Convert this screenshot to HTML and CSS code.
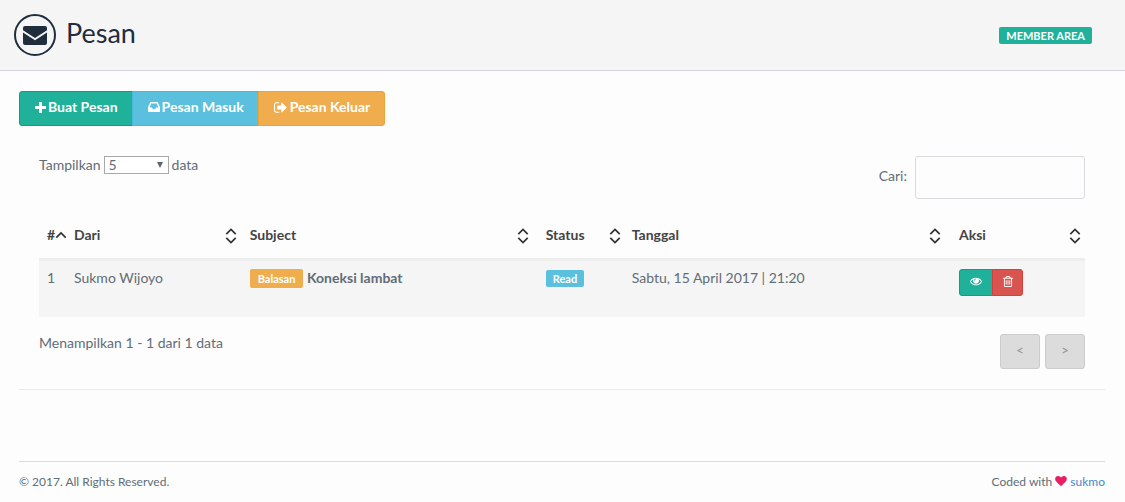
FILE: index.html
```
<!DOCTYPE html>
<html lang="id">
<head>
<meta charset="utf-8">
<meta name="viewport" content="width=device-width, initial-scale=1">
<title>Pesan</title>
<link rel="stylesheet" href="styles.css">
</head>
<body>
<svg class="sprite" aria-hidden="true">
  <symbol id="sort" viewBox="0 0 12 16"><path d="M1.300 6.200 6 1.500l4.700 4.700M1.300 9.800 6 14.500l4.700-4.700" fill="none" stroke="#333" stroke-width="1.700"/></symbol>
</svg>
<header class="page-header">
  <svg class="mail" viewBox="0 0 42 42" aria-hidden="true"><circle cx="21" cy="21" r="20" fill="none" stroke="#1f2d3d" stroke-width="2"/><path d="M11 12h20q2 0 2 2v2.200L21 24 9 16.200v-2.200q0-2 2-2zM9 18.500l12 7.700 12-7.700v10.500q0 2-2 2H11q-2 0-2-2z" fill="#1f2d3d"/></svg>
  <h1 class="title">Pesan</h1>
  <span class="label label-green member">MEMBER AREA</span>
</header>
<main class="content">
  <nav class="button-group">
    <button class="btn green" type="button"><svg class="icon-plus" viewBox="192 128 1408 1408" aria-hidden="true"><path d="M1600 736v192q0 40-28 68t-68 28h-416v416q0 40-28 68t-68 28h-192q-40 0-68-28t-28-68v-416h-416q-40 0-68-28t-28-68v-192q0-40 28-68t68-28h416v-416q0-40 28-68t68-28h192q40 0 68 28t28 68v416h416q40 0 68 28t28 68z"/></svg>Buat Pesan</button>
    <button class="btn blue" type="button"><svg class="icon-inbox" viewBox="128 128 1536 1536" aria-hidden="true"><path d="M1151 960h316q-1-3-2.500-8t-2.500-8l-212-496h-708l-212 496q-1 2-2.500 8t-2.500 8h316l95 192h320zm513 30v482q0 26-19 45t-45 19h-1408q-26 0-45-19t-19-45v-482q0-62 25-123l238-552q10-25 36.500-42t52.500-17h832q26 0 52.500 17t36.500 42l238 552q25 61 25 123z"/></svg>Pesan Masuk</button>
    <button class="btn orange" type="button"><svg class="icon-out" viewBox="64 128 1600 1536" aria-hidden="true"><path d="M704 1440q0 4 1 20t.5 26.500-3 23.500-10 19.500-20.500 6.500h-320q-119 0-203.500-84.500t-84.500-203.500v-704q0-119 84.500-203.500t203.500-84.500h320q13 0 22.500 9.500t9.500 22.500q0 4 1 20t.5 26.500-3 23.500-10 19.500-20.500 6.500h-320q-66 0-113 47t-47 113v704q0 66 47 113t113 47h312l11.500 1 11.500 3 8 5.500 7 9 2 13.500zm928-544q0 26-19 45l-544 544q-19 19-45 19t-45-19-19-45v-288h-448q-26 0-45-19t-19-45v-384q0-26 19-45t45-19h448v-288q0-26 19-45t45-19 45 19l544 544q19 19 19 45z"/></svg>Pesan Keluar</button>
  </nav>
  <section class="panel">
    <div class="toolbar">
      <div class="length"><label for="length">Tampilkan</label>
        <span class="select-wrap"><select id="length"><option>5</option><option>10</option><option>25</option></select><svg viewBox="0 0 6 6" aria-hidden="true"><path d="M0 0h6L3 6z"/></svg></span>
        <label for="length">data</label></div>
      <div class="search"><label for="search">Cari:</label><input id="search" type="search"></div>
    </div>
    <table class="messages">
      <colgroup><col class="c-no"><col class="c-from"><col class="c-subject"><col class="c-status"><col class="c-date"><col class="c-action"></colgroup>
      <thead><tr>
        <th scope="col"><div class="th th-first">#<svg class="asc" viewBox="0 0 12 8" aria-hidden="true"><path d="M1.300 6.700 6 2l4.700 4.700" fill="none" stroke="#333" stroke-width="1.700"/></svg></div></th>
        <th scope="col"><div class="th">Dari<svg class="sort"><use href="#sort"/></svg></div></th>
        <th scope="col"><div class="th">Subject<svg class="sort"><use href="#sort"/></svg></div></th>
        <th scope="col"><div class="th">Status<svg class="sort"><use href="#sort"/></svg></div></th>
        <th scope="col"><div class="th">Tanggal<svg class="sort"><use href="#sort"/></svg></div></th>
        <th scope="col"><div class="th">Aksi<svg class="sort"><use href="#sort"/></svg></div></th>
      </tr></thead>
      <tbody><tr>
        <td>1</td>
        <td>Sukmo Wijoyo</td>
        <td><span class="label label-orange">Balasan</span> <strong>Koneksi lambat</strong></td>
        <td><span class="label label-blue">Read</span></td>
        <td>Sabtu, 15 April 2017 | 21:20</td>
        <td><div class="actions">
          <button class="btn small green" type="button" aria-label="Lihat"><svg class="icon-eye" viewBox="0 256 1792 1408" aria-hidden="true"><path d="M1664 960q-152-236-381-353 61 104 61 225 0 185-131.500 316.500t-316.500 131.500-316.500-131.500-131.500-316.500q0-121 61-225-229 117-381 353 133 205 333.500 326.500t434.500 121.500 434.500-121.500 333.500-326.500zm-720-384q0-20-14-34t-34-14q-125 0-214.500 89.500t-89.500 214.500q0 20 14 34t34 14 34-14 14-34q0-86 61-147t147-61q20 0 34-14t14-34zm848 384q0 34-20 69-140 230-376.500 368.500t-499.500 138.500-499.500-139-376.500-368q-20-35-20-69t20-69q140-229 376.500-368t499.500-139 499.500 139 376.500 368q20 35 20 69z"/></svg></button>
          <button class="btn small red" type="button" aria-label="Hapus"><svg class="icon-trash" viewBox="192 128 1408 1536" aria-hidden="true"><path d="M704 736v576q0 14-9 23t-23 9h-64q-14 0-23-9t-9-23v-576q0-14 9-23t23-9h64q14 0 23 9t9 23zm256 0v576q0 14-9 23t-23 9h-64q-14 0-23-9t-9-23v-576q0-14 9-23t23-9h64q14 0 23 9t9 23zm256 0v576q0 14-9 23t-23 9h-64q-14 0-23-9t-9-23v-576q0-14 9-23t23-9h64q14 0 23 9t9 23zm128 724v-948h-896v948q0 22 7 40.500t14.500 27 10.500 8.500h832q3 0 10.500-8.500t14.500-27 7-40.500zm-672-1076h448l-48-117q-7-9-17-11h-317q-10 2-17 11zm928 32v64q0 14-9 23t-23 9h-96v948q0 83-47 143.500t-113 60.500h-832q-66 0-113-58.500t-47-141.500v-952h-96q-14 0-23-9t-9-23v-64q0-14 9-23t23-9h309l70-167q15-37 54-63t79-26h320q40 0 79 26t54 63l70 167h309q14 0 23 9t9 23z"/></svg></button>
        </div></td>
      </tr></tbody>
    </table>
    <div class="table-footer">
      <p class="info">Menampilkan 1 - 1 dari 1 data</p>
      <div class="pager"><button type="button" disabled>&lt;</button><button type="button" disabled>&gt;</button></div>
    </div>
  </section>
</main>
<footer class="page-footer">
  <span>© 2017. All Rights Reserved.</span>
  <span>Coded with <svg class="heart" viewBox="0 128 1792 1536" role="img" aria-label="love"><path d="M896 1664q-26 0-44-18l-624-602q-10-8-27.500-26t-55.500-65.500-68-97.500-53.500-121-23.500-138q0-220 127-344t351-124q62 0 126.500 21.500t120 58 95.500 68.500 76 68q36-36 76-68t95.500-68.500 120-58 126.500-21.500q224 0 351 124t127 344q0 221-229 450l-623 600q-18 18-44 18z"/></svg> <a href="#">sukmo</a></span>
</footer>
</body>
</html>
```
FILE: styles.css
```
* { box-sizing: border-box; }
body { margin: 0; background: #fdfdfd; color: #626c76; font: 14px/20px Lato, "Liberation Sans", sans-serif; }
button, input, select { font: inherit; color: inherit; }
.sprite { display: none; }

.page-header { display: flex; align-items: center; height: 71px; padding: 0 33px 0 14px; background: #f5f5f5; border-bottom: 1px solid #d5d5db; }
.mail { width: 42px; height: 42px; }
.title { margin: 0 0 5px 10px; color: #1f2d3d; font-size: 27px; line-height: 32px; font-weight: 400; }
.member { margin-left: auto; }

.label { display: inline-block; padding: 0 7px; border-radius: 2px; color: #fff; font-size: 11px; line-height: 17px; font-weight: 700; }
.label-green { background: #1fb199; }
.label-orange { background: #f0ad4e; padding: 0 8px; line-height: 19px; }
.label-blue { background: #5bc0de; }

.content { padding: 20px 20px 0 19px; }
.button-group { display: flex; }
.btn { display: inline-flex; align-items: center; margin: 0; height: 35px; padding: 0 14px 3px 15px; border: 1px solid; color: #fff; font-weight: 700; white-space: nowrap; }
.btn svg { fill: #fff; }
.btn + .btn { margin-left: -1px; }
.btn:first-child { border-radius: 3px 0 0 3px; }
.btn:last-child { border-radius: 0 3px 3px 0; }
.green { background: #1fb199; border-color: #189b86; }
.blue { background: #5bc0de; border-color: #46b8da; }
.orange { background: #f0ad4e; border-color: #eea236; }
.red { background: #d9534f; border-color: #d43f3a; }
.icon-plus { width: 11px; height: 11px; margin-right: 2px; }
.icon-inbox { width: 12px; height: 12px; margin-right: 2px; }
.icon-out { width: 13px; height: 13px; margin-right: 3px; }

.panel { padding: 30px 20px 20px; border-bottom: 1px solid #e9ebec; }
.toolbar { display: flex; justify-content: space-between; align-items: flex-start; }
.length { display: flex; align-items: center; gap: 3px; line-height: 18px; }
.select-wrap { position: relative; display: inline-flex; }
.select-wrap select { width: 65px; height: 18px; padding: 0 4px; border: 1px solid #a9a9a9; border-radius: 0; background: #fff; appearance: none; line-height: 16px; }
.select-wrap svg { position: absolute; right: 6px; top: 6px; width: 6px; height: 6px; fill: #5b6670; pointer-events: none; }
.search { display: flex; align-items: center; gap: 8px; }
.search label { padding-bottom: 3px; }
.search input { width: 170px; height: 43px; padding: 8px; border: 1px solid #d8dade; border-radius: 3px; background: #fff0; }

.messages { width: 100%; margin-top: 15px; border-collapse: collapse; table-layout: fixed; }
.c-no { width: 27px; }
.c-from { width: 16.800%; }
.c-subject { width: 28.300%; }
.c-status { width: 86px; }
.c-action { width: 134px; }
.messages th, .messages td { padding: 7px 0 8px 8px; text-align: left; vertical-align: top; }
.messages th { height: 45px; padding: 11px 0 11px 8px; border-bottom: 3px solid #eee; color: #444; font-weight: 700; }
.th { display: flex; align-items: center; justify-content: space-between; height: 20px; padding-right: 3%; }
.th-first { justify-content: flex-start; margin-right: -8px; padding: 0; }
.sort { width: 12px; height: 16px; margin-top: 2px; }
.asc { width: 12px; height: 8px; flex: none; }
.messages td { height: 58px; background: #f5f5f5; }
.actions { display: flex; padding-top: 1px; }
.small { height: 27px; padding: 0 10px 1px; }
.small + .small { padding: 0 9px 1px 10px; }
.icon-eye { width: 12px; height: 11px; }
.icon-trash { width: 10px; height: 11px; }

.table-footer { display: flex; justify-content: space-between; align-items: flex-start; margin-top: 16px; }
.info { margin: 0; }
.pager { display: flex; gap: 5px; padding-top: 1px; }
.pager button { width: 40px; height: 35px; padding: 0 0 3px; border: 1px solid #ccc; border-radius: 3px; background: #dcdcdc; color: #8b8f94; font-size: 13px; }

.page-footer { display: flex; justify-content: space-between; margin: 71px 20px 0 19px; padding: 10px 0; border-top: 1px solid #d9dcdd; font-size: 12px; }
.heart { width: 12px; height: 10px; fill: #e91e63; }
.page-footer a { color: #428bca; text-decoration: none; }
```
